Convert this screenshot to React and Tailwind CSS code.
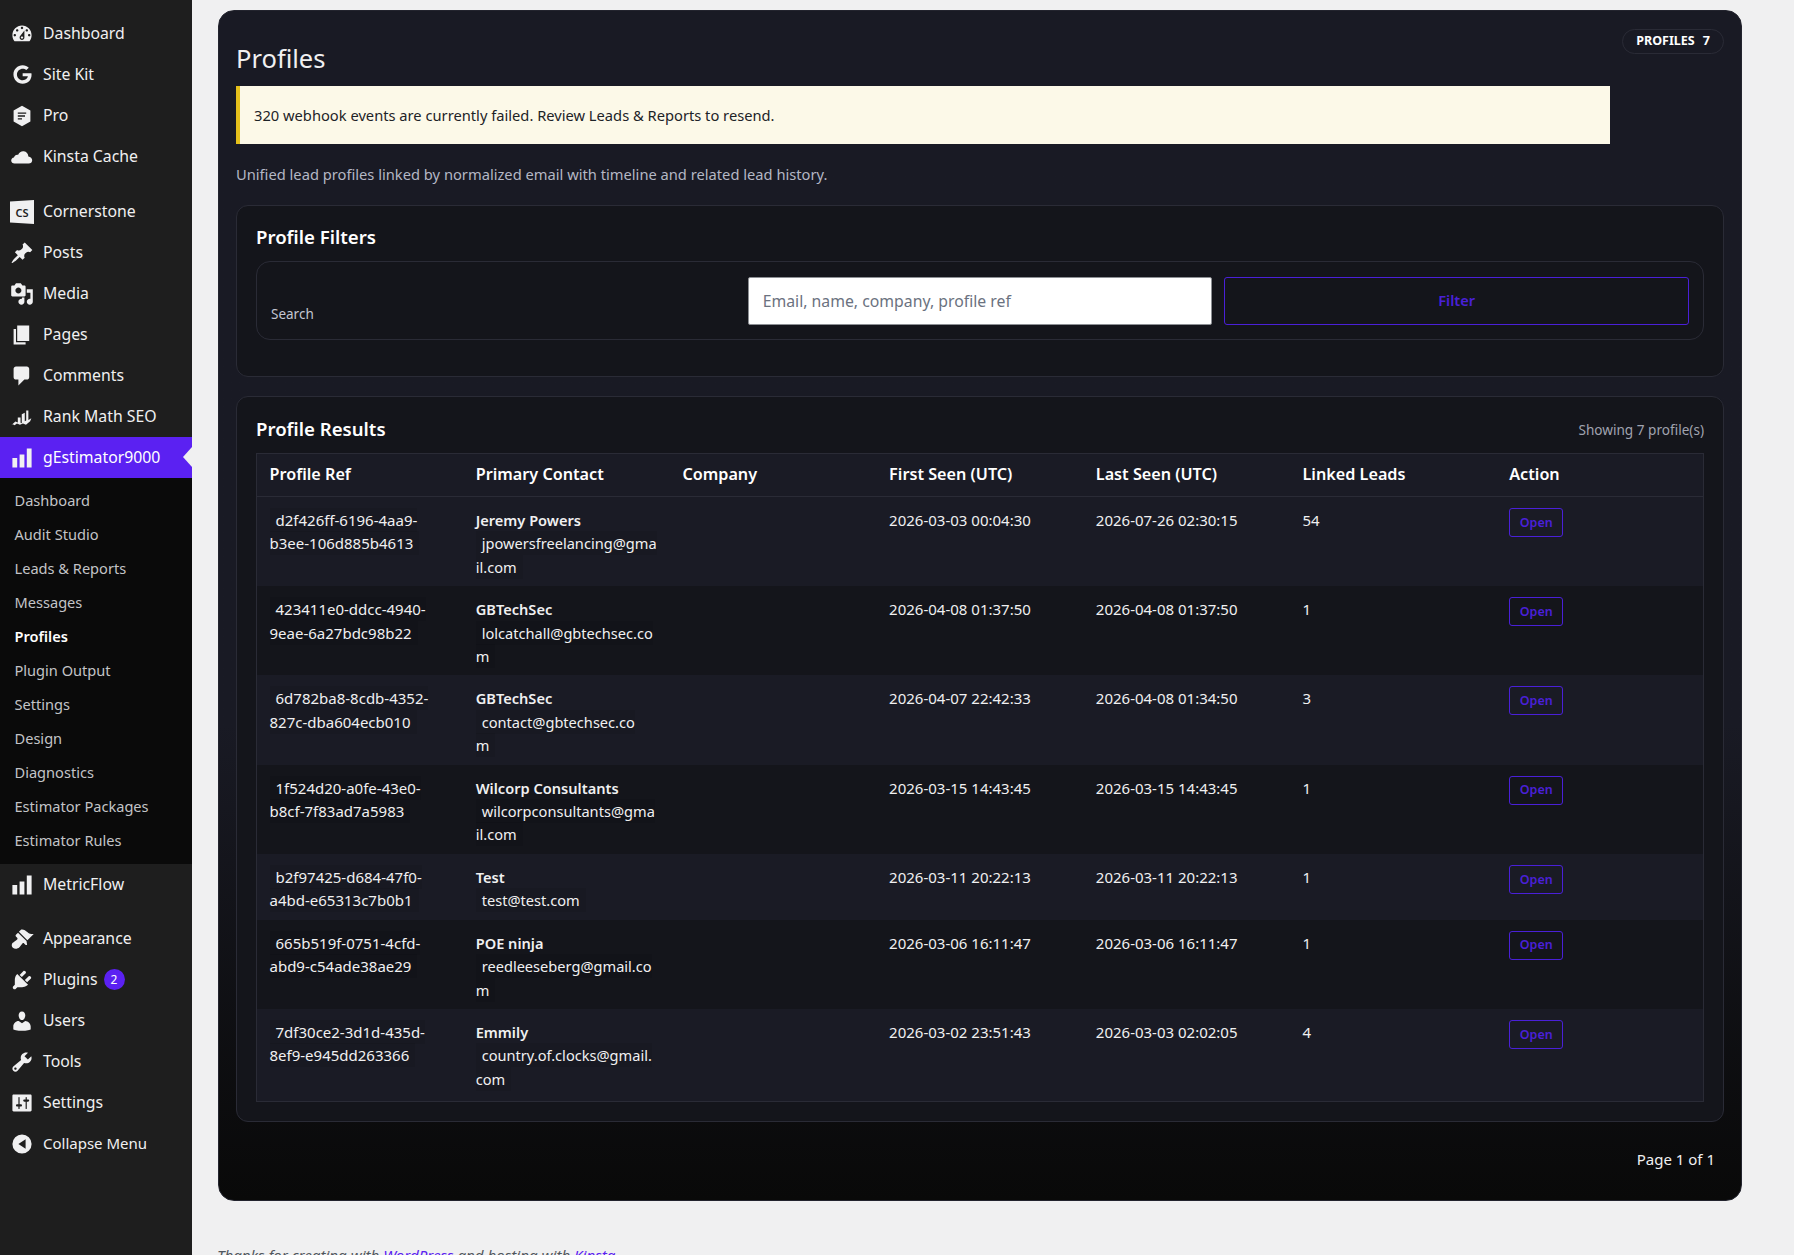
import { FaGoogle } from 'react-icons/fa';

// ── Admin menu icons (dashicon-style, 20 unit box) ────────────────────────────

const ICON_PATHS = {
  dashboard: 'M3.76 16h12.48c1.1-1.37 1.76-3.11 1.76-5 0-4.42-3.58-8-8-8s-8 3.58-8 8c0 1.89.66 3.63 1.76 5zM10 4c.55 0 1 .45 1 1s-.45 1-1 1-1-.45-1-1 .45-1 1-1zM6 6c.55 0 1 .45 1 1s-.45 1-1 1-1-.45-1-1 .45-1 1-1zm8 0c.55 0 1 .45 1 1s-.45 1-1 1-1-.45-1-1 .45-1 1-1zm-5.37 5.55L12 7v6c0 1.1-.9 2-2 2s-2-.9-2-2c0-.57.24-1.08.63-1.45zM4 10c.55 0 1 .45 1 1s-.45 1-1 1-1-.45-1-1 .45-1 1-1zm12 0c.55 0 1 .45 1 1s-.45 1-1 1-1-.45-1-1 .45-1 1-1zm-5 3c0-.55-.45-1-1-1s-1 .45-1 1 .45 1 1 1 1-.45 1-1z',
  pro: 'M10 1.500l7 4v9l-7 4-7-4v-9zM6.500 7v1.200h7V7zm0 2.400v1.200h6V9.400zm0 2.400V13h3.500v-1.200z',
  cloud: 'M3.800 15.500C2.200 15.500 1 14.400 1 13c0-1.300 1-2.400 2.300-2.500C3.700 8.800 5.200 7.800 6.800 8.200 7.700 6.200 9.500 5 11.500 5.300c2.200.3 3.700 2.100 3.800 4.200 1.900.2 3.200 1.700 3.200 3.200 0 1.600-1.200 2.800-3 2.800z',
  pin: 'M10.44 3.02l1.82-1.82 6.36 6.35-1.83 1.82c-1.05-.68-2.48-.57-3.41.36l-.75.75c-.92.93-1.04 2.35-.35 3.41l-1.83 1.82-2.41-2.41-2.8 2.79c-.42.42-3.38 2.71-3.8 2.29s1.86-3.39 2.28-3.81l2.79-2.79L4.1 9.36l1.83-1.82c1.05.69 2.48.57 3.4-.36l.75-.75c.93-.92 1.05-2.35.36-3.41z',
  media: 'M13 11V4c0-.55-.45-1-1-1h-1.67L9 1H5L3.67 3H2c-.55 0-1 .45-1 1v7c0 .55.45 1 1 1h10c.55 0 1-.45 1-1zM7 4.500c1.380 0 2.500 1.120 2.500 2.500S8.380 9.500 7 9.500 4.500 8.380 4.500 7 5.620 4.500 7 4.500zM14 6h5v10.500c0 1.380-1.120 2.500-2.500 2.500S14 17.880 14 16.500s1.120-2.500 2.500-2.500c.17 0 .34.02.5.05V9h-3V6zm-4 8.050V13h2v3.500c0 1.380-1.120 2.500-2.500 2.500S7 17.880 7 16.500 8.120 14 9.500 14c.17 0 .34.02.5.05z',
  pages: 'M6 15V2h10v13H6zm-1 1h8v2H3V5h2v11z',
  comments: 'M5 2h9c1.1 0 2 .9 2 2v7c0 1.1-.9 2-2 2h-2l-5 5v-5H5c-1.1 0-2-.9-2-2V4c0-1.1.9-2 2-2z',
  rank: 'M1 16.800l3.500-3 2 .8V10.500h2.300v4.300l1 .5V7.800l2.500-1.300v7l1.200-.6V4.500h1.800v8l2.500-1.500-1 2.500-3.500 3-2.500-1-2.500 1-2.500-1-2 1.300-1.800-1z',
  chart: 'M18 18V2h-4v16h4zm-6 0V7H8v11h4zm-6 0v-8H2v8h4z',
  brush: 'M14.480 11.060L7.410 3.990l1.500-1.500c.5-.56 2.300-.47 3.510.32 1.210.8 1.430 1.280 2.910 2.100 1.180.64 2.450 1.260 4.450.85zm-.71.71L6.700 4.700 4.930 6.470c-.39.39-.39 1.020 0 1.410l1.060 1.060c.39.39.39 1.030 0 1.420-.6.6-1.430 1.110-2.210 1.690-.35.26-.7.53-1.010.84C1.430 13.230.91 15.800 2.400 17.300c1.500 1.490 4.070.97 5.430-.37.31-.31.58-.66.85-1.020.57-.78 1.080-1.610 1.690-2.210.39-.39 1.020-.39 1.410 0l1.060 1.060c.39.39 1.020.39 1.410 0z',
  plugin: 'M13.110 4.360L9.870 7.600 8 5.730l3.240-3.240c.35-.34 1.050-.2 1.560.32.52.51.66 1.210.31 1.550zm-8 1.770l.91-1.120 9.010 9.010-1.190.84c-.71.71-2.630 1.160-3.820 1.160H6.140L4.900 17.260c-.59.59-1.540.59-2.120 0-.59-.58-.59-1.530 0-2.120l1.240-1.240v-3.880c0-1.130.4-3.190 1.090-3.890zm7.260 3.970l3.240-3.240c.34-.35 1.040-.21 1.550.31.52.51.66 1.210.31 1.550l-3.240 3.250z',
  user: 'M10 9.250c-2.270 0-2.730-3.440-2.730-3.440C7 4.020 7.820 2 9.970 2c2.160 0 2.980 2.020 2.710 3.810 0 0-.41 3.440-2.680 3.440zm0 2.570L12.720 10c2.390 0 4.520 2.330 4.520 4.530v2.490s-3.650 1.130-7.240 1.130c-3.650 0-7.240-1.130-7.240-1.130v-2.490c0-2.250 1.940-4.480 4.470-4.480z',
  tools: 'M16.680 9.770c-1.340 1.340-3.300 1.670-4.950.99l-5.410 6.520c-.99.99-2.590.99-3.580 0s-.99-2.590 0-3.570l6.520-5.420c-.68-1.650-.35-3.610.99-4.950 1.280-1.280 3.120-1.620 4.720-1.060l-2.890 2.890 2.820 2.820 2.860-2.870c.53 1.580.18 3.390-1.080 4.650zM3.810 16.210c.4.39 1.040.39 1.430 0 .4-.4.4-1.040 0-1.430-.39-.4-1.030-.4-1.430 0-.39.39-.39 1.030 0 1.430z',
  settings: 'M18 16V4c0-.55-.45-1-1-1H3c-.55 0-1 .45-1 1v12c0 .55.45 1 1 1h14c.55 0 1-.45 1-1zM8 11h1c.55 0 1 .45 1 1s-.45 1-1 1H8v1.500c0 .28-.22.5-.5.5s-.5-.22-.5-.5V13H6c-.55 0-1-.45-1-1s.45-1 1-1h1V5.500c0-.28.22-.5.5-.5s.5.22.5.5V11zm5-2h-1c-.55 0-1-.45-1-1s.45-1 1-1h1V5.500c0-.28.22-.5.5-.5s.5.22.5.5V7h1c.55 0 1 .45 1 1s-.45 1-1 1h-1v5.500c0 .28-.22.5-.5.5s-.5-.22-.5-.5V9z',
  collapse: 'M10 2a8 8 0 1 0 0 16 8 8 0 0 0 0-16zm3 4v8l-6-4z',
};

function MenuIcon({ name }) {
  if (name === 'google') return <FaGoogle size={19} className="text-[#f0f0f1]" />;
  if (name === 'cs') {
    return (
      <svg viewBox="0 0 24 24" className="h-6 w-6">
        <polygon points="0,1.500 24,0 24,24 0,22.500" fill="#f0f0f1" />
        <text x="12" y="16.500" textAnchor="middle" fontSize="11" fontWeight="600" fill="#1e1e1e">CS</text>
      </svg>
    );
  }
  return (
    <svg viewBox="0 0 20 20" className="h-6 w-6 fill-[#f0f0f1]">
      <path fillRule="evenodd" d={ICON_PATHS[name]} />
    </svg>
  );
}

function MenuItem({ icon, label, active, badge, className = '' }) {
  return (
    <div className={`relative flex h-[41px] items-center text-[15.8px] text-[#f0f0f1] ${active ? 'bg-[#5b21f2] text-white' : ''} ${className}`}>
      <span className="flex w-[43px] shrink-0 items-center justify-center pl-[1px]">
        <MenuIcon name={icon} />
      </span>
      <span>{label}</span>
      {badge && (
        <span className="ml-[6px] flex h-[21px] w-[21px] items-center justify-center rounded-full bg-[#5b21f2] text-[12px] text-white">
          {badge}
        </span>
      )}
      {active && (
        <span className="absolute top-[10px] right-0 h-0 w-0 border-y-[10px] border-r-[9px] border-y-transparent border-r-[#f0f0f1]" />
      )}
    </div>
  );
}

const SUBMENU = [
  'Dashboard', 'Audit Studio', 'Leads & Reports', 'Messages', 'Profiles', 'Plugin Output',
  'Settings', 'Design', 'Diagnostics', 'Estimator Packages', 'Estimator Rules',
];

function Sidebar() {
  return (
    <aside className="w-[192px] shrink-0 bg-[#1e1e1e] pt-[13px]">
      <MenuItem icon="dashboard" label="Dashboard" />
      <MenuItem icon="google" label="Site Kit" />
      <MenuItem icon="pro" label="Pro" />
      <MenuItem icon="cloud" label="Kinsta Cache" />
      <MenuItem icon="cs" label="Cornerstone" className="mt-[14px]" />
      <MenuItem icon="pin" label="Posts" />
      <MenuItem icon="media" label="Media" />
      <MenuItem icon="pages" label="Pages" />
      <MenuItem icon="comments" label="Comments" />
      <MenuItem icon="rank" label="Rank Math SEO" />
      <MenuItem icon="chart" label="gEstimator9000" active />
      <div className="bg-[#0a0a0a] pt-[6px] pb-[6px]">
        {SUBMENU.map(item => (
          <div
            key={item}
            className={`flex h-[34px] items-center pl-[14.500px] text-[14.6px] ${item === 'Profiles' ? 'font-semibold text-white' : 'text-[#c3c4c7]'}`}
          >
            {item}
          </div>
        ))}
      </div>
      <MenuItem icon="chart" label="MetricFlow" />
      <MenuItem icon="brush" label="Appearance" className="mt-[13px]" />
      <MenuItem icon="plugin" label="Plugins" badge="2" />
      <MenuItem icon="user" label="Users" />
      <MenuItem icon="tools" label="Tools" />
      <MenuItem icon="settings" label="Settings" />
      <MenuItem icon="collapse" label="Collapse Menu" className="text-[15px]" />
    </aside>
  );
}

// ── Profile table ─────────────────────────────────────────────────────────────

const PROFILES = [
  { ref: 'd2f426ff-6196-4aa9-\nb3ee-106d885b4613', name: 'Jeremy Powers', email: 'jpowersfreelancing@gma\nil.com', first: '2026-03-03 00:04:30', last: '2026-07-26 02:30:15', leads: 54 },
  { ref: '423411e0-ddcc-4940-\n9eae-6a27bdc98b22', name: 'GBTechSec', email: 'lolcatchall@gbtechsec.co\nm', first: '2026-04-08 01:37:50', last: '2026-04-08 01:37:50', leads: 1 },
  { ref: '6d782ba8-8cdb-4352-\n827c-dba604ecb010', name: 'GBTechSec', email: 'contact@gbtechsec.co\nm', first: '2026-04-07 22:42:33', last: '2026-04-08 01:34:50', leads: 3 },
  { ref: '1f524d20-a0fe-43e0-\nb8cf-7f83ad7a5983', name: 'Wilcorp Consultants', email: 'wilcorpconsultants@gma\nil.com', first: '2026-03-15 14:43:45', last: '2026-03-15 14:43:45', leads: 1 },
  { ref: 'b2f97425-d684-47f0-\na4bd-e65313c7b0b1', name: 'Test', email: 'test@test.com', first: '2026-03-11 20:22:13', last: '2026-03-11 20:22:13', leads: 1 },
  { ref: '665b519f-0751-4cfd-\nabd9-c54ade38ae29', name: 'POE ninja', email: 'reedleeseberg@gmail.co\nm', first: '2026-03-06 16:11:47', last: '2026-03-06 16:11:47', leads: 1 },
  { ref: '7df30ce2-3d1d-435d-\n8ef9-e945dd263366', name: 'Emmily', email: 'country.of.clocks@gmail.\ncom', first: '2026-03-02 23:51:43', last: '2026-03-03 02:02:05', leads: 4 },
];

const COLUMNS = ['Profile Ref', 'Primary Contact', 'Company', 'First Seen (UTC)', 'Last Seen (UTC)', 'Linked Leads', 'Action'];

function Code({ children, className = '' }) {
  return <code className={`bg-black/[.07] px-[6px] py-[2px] font-[inherit] whitespace-pre ${className}`}>{children}</code>;
}

function ProfileTable() {
  return (
    <table className="w-full table-fixed border border-[#2a2b36] bg-[#1a1b25] text-[14.6px] leading-[23.4px] text-[#f0f0f1]">
      <thead>
        <tr className="border-b border-[#2a2b36]">
          {COLUMNS.map(col => (
            <th key={col} className="h-[43px] px-[12.500px] text-left text-[16.2px] font-semibold text-white">{col}</th>
          ))}
        </tr>
      </thead>
      <tbody className="[&_tr:last-child_td]:pb-[10px]">
        {PROFILES.map((p, i) => (
          <tr key={p.ref} className={i % 2 === 0 ? 'bg-[#1a1b25]' : 'bg-[#14151b]'}>
            <td className="px-[12.500px] pt-[12px] pb-[7px] align-top"><Code className="text-[15px]">{p.ref}</Code></td>
            <td className="px-[12.500px] pt-[12px] pb-[7px] align-top">
              <div className="font-semibold">{p.name}</div>
              <Code>{p.email}</Code>
            </td>
            <td className="px-[12.500px]" />
            <td className="px-[12.500px] pt-[12px] pb-[7px] align-top text-[15px]">{p.first}</td>
            <td className="px-[12.500px] pt-[12px] pb-[7px] align-top text-[15px]">{p.last}</td>
            <td className="px-[12.500px] pt-[12px] pb-[7px] align-top text-[15px]">{p.leads}</td>
            <td className="px-[12.500px] pt-[11px] align-top">
              <button type="button" className="flex h-[29px] w-[54px] items-center justify-center rounded-[3px] border border-[#4a20d8] text-[12.5px] font-semibold text-[#4a20d8]">
                Open
              </button>
            </td>
          </tr>
        ))}
      </tbody>
    </table>
  );
}

// ── Page ──────────────────────────────────────────────────────────────────────

export default function App() {
  return (
    <div className="flex h-[1255px] overflow-hidden bg-[#f0f0f1] font-['Noto_Sans',sans-serif]">
      <Sidebar />
      <main className="min-w-0 flex-1 pt-[10px] pl-[26px]">
        <div className="relative h-[1191px] w-[1524px] rounded-[16px] border border-[#23242e] bg-gradient-to-b from-[#191a24] from-60% to-[#090909] px-[17px] pt-[29px]">
          <span className="absolute top-[18px] right-[17px] flex h-[25px] w-[102px] items-center justify-center gap-2 rounded-full border border-[#2a2b36] text-[12.5px] font-bold text-white">
            <span>PROFILES</span><span>7</span>
          </span>
          <h1 className="text-[25.5px] leading-[36px] text-[#f0f0f1]">Profiles</h1>
          <div className="mt-[10px] flex h-[58px] w-[1374px] items-center border-l-4 border-[#e5c01b] bg-[#fcf9e8] pl-[14px] text-[14.7px] text-[#1d2327]">
            320 webhook events are currently failed. Review Leads &amp; Reports to resend.
          </div>
          <p className="mt-[18px] text-[14.7px] leading-[24px] text-[#b4b7c4]">
            Unified lead profiles linked by normalized email with timeline and related lead history.
          </p>

          <section className="mt-[19px] h-[172px] rounded-[12px] border border-[#2a2b36] bg-[#14151b] px-[19px] pt-[17px]">
            <h2 className="text-[18.6px] leading-[27px] font-semibold text-white">Profile Filters</h2>
            <div className="mt-[11px] grid h-[79px] grid-cols-3 items-center gap-3 rounded-[14px] border border-[#2a2b36] px-[14px]">
              <label className="self-end pb-[16px] text-[13.5px] leading-[18px] text-[#c3c6d2]">Search</label>
              <input
                readOnly
                placeholder="Email, name, company, profile ref"
                className="h-[48px] rounded-[2px] border border-[#8c8f94] bg-white px-[14px] text-[15.8px] placeholder:text-[#6b7280]"
              />
              <button type="button" className="h-[48px] rounded-[3px] border border-[#4a20d8] text-[14.6px] font-semibold text-[#4a20d8]">
                Filter
              </button>
            </div>
          </section>

          <section className="mt-[19px] rounded-[12px] border border-[#2a2b36] bg-[#14151b] px-[19px] pt-[18px] pb-[19px]">
            <div className="flex items-center justify-between">
              <h2 className="text-[18.6px] leading-[27px] font-semibold text-white">Profile Results</h2>
              <span className="pt-1 text-[13.6px] text-[#a0a3b0]">Showing 7 profile(s)</span>
            </div>
            <div className="mt-[11px]"><ProfileTable /></div>
          </section>

          <p className="mt-[25px] pr-[9px] text-right text-[15px] leading-[24px] text-[#f0f0f1]">Page 1 of 1</p>
        </div>
        <p className="mt-[44px] -ml-[1px] text-[15.1px] leading-[20px] text-[#50575e] italic">
          Thanks for creating with <span className="text-[#5b21f2] underline">WordPress</span> and hosting with <span className="text-[#5b21f2] underline">Kinsta</span>.
        </p>
      </main>
    </div>
  );
}
